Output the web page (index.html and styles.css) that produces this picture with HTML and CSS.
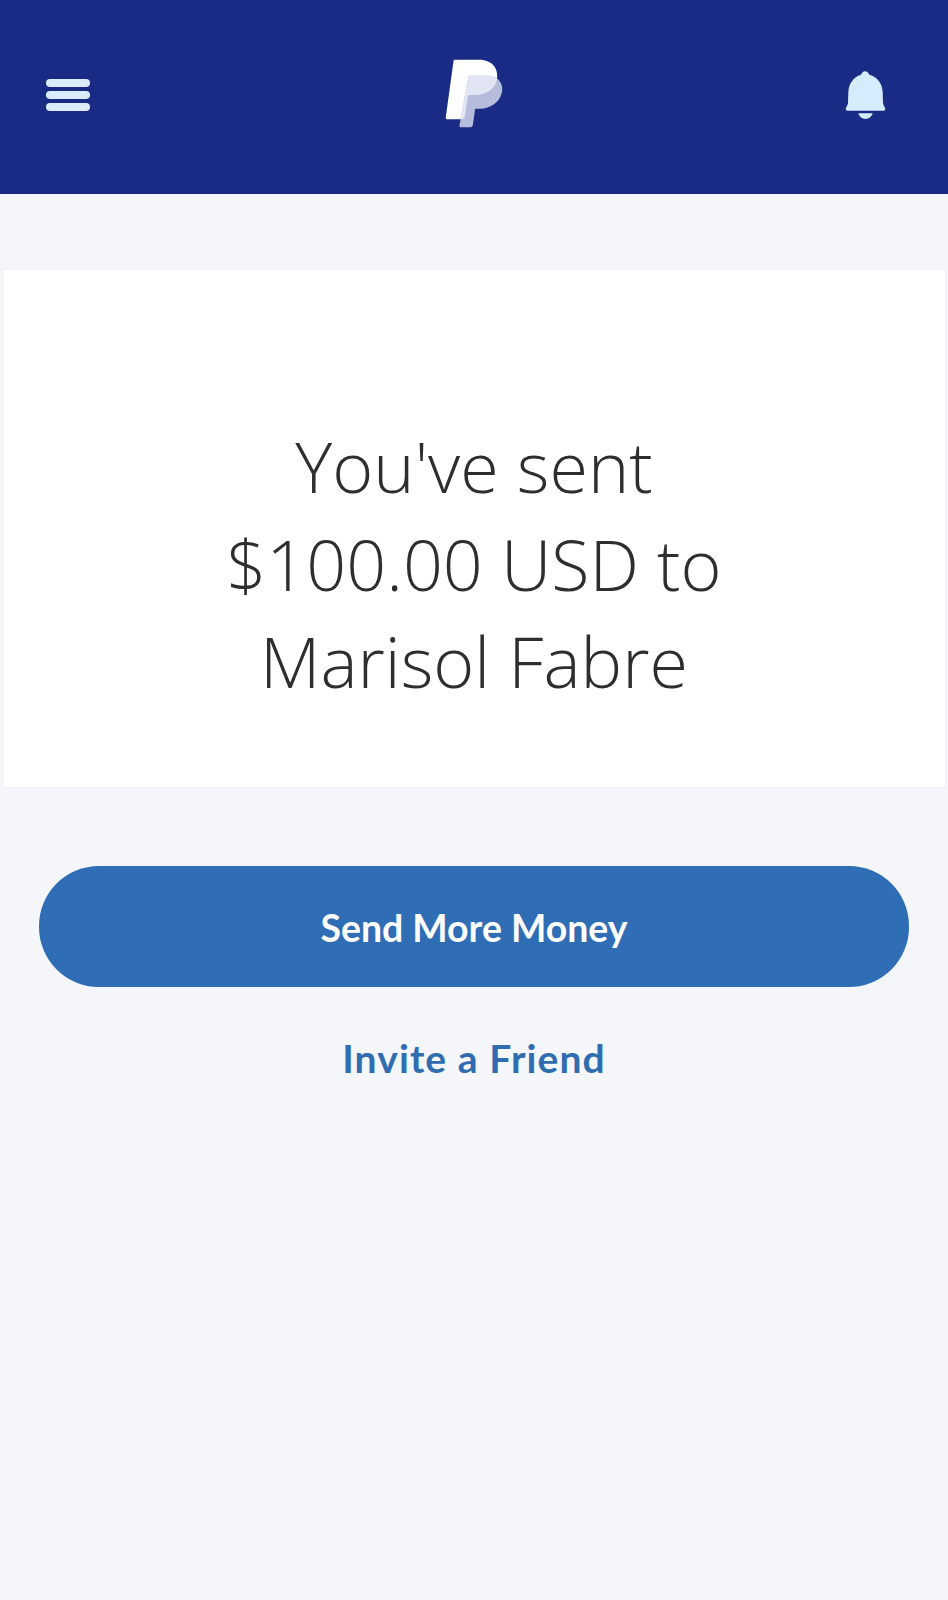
FILE: index.html
```html
<!DOCTYPE html>
<html lang="en">
<head>
<meta charset="utf-8">
<title>PayPal</title>
<link rel="stylesheet" href="styles.css">
</head>
<body>
<header class="topbar">
  <div class="menu"><span></span><span></span><span></span></div>
  <svg class="logo" viewBox="100 55 185 210" aria-hidden="true">
    <defs>
      <path id="front" d="M135 60H208C248 60 268 88 261 122C253 152 226 166 196 166H175L165 232C164 237 160 239 155 239H113C109 239 107 236 108 232L131 64C132 61 133 60 135 60Z"/>
      <path id="back" d="M176 108H240C268 112 282 134 276 160C268 190 240 207 212 207H196L189 257C188 261 185 263 181 263H154C150 263 148 260 149 256Z"/>
      <clipPath id="frontclip"><use href="#front"/></clipPath>
    </defs>
    <use href="#front" class="logo-front"/>
    <use href="#back" class="logo-back"/>
    <use href="#back" class="logo-overlap" clip-path="url(#frontclip)"/>
  </svg>
  <svg class="bell" viewBox="105 58 123 150" aria-hidden="true">
    <path d="M165 62C171 62 175 66 178 72C203 79 217 99 218 124L219 156C220 164 223 167 225 171C227 175 225 180 220 180H113C108 180 106 175 108 171C110 167 113 164 114 156L115 124C116 99 130 79 153 72C156 66 159 62 165 62Z"/>
    <path d="M145 188H188C185 198 177 205 166 205C156 205 148 198 145 188Z"/>
  </svg>
</header>
<main class="content">
  <section class="card">
    <h1 class="message">You've sent<br>$100.00 USD to<br>Marisol Fabre</h1>
  </section>
  <div class="actions">
    <a class="primary" href="#">Send More Money</a>
    <a class="secondary" href="#">Invite a Friend</a>
  </div>
</main>
</body>
</html>
```
FILE: styles.css
```css
* { box-sizing: border-box; }
html, body { margin: 0; padding: 0; }
body {
  min-height: 1600px;
  background: #f4f6fa;
  font-family: "Lato", "Liberation Sans", sans-serif;
  color: #2c2e2f;
}
.topbar {
  height: 194px;
  background: #1a2b86;
  display: grid;
  grid-template-columns: 1fr auto 1fr;
  align-items: center;
  padding: 0 46px 4px;
}
.menu { display: flex; flex-direction: column; gap: 4.5px; width: 44px; }
.menu span { display: block; height: 7.5px; border-radius: 4px; background: #dcecfb; }
.logo { width: 62px; height: 70px; display: block; margin-bottom: 4px; }
.logo-front { fill: #ffffff; }
.logo-back { fill: #b6bcdc; }
.logo-overlap { fill: #e2e5f3; }
.bell { width: 41px; height: 50px; display: block; fill: #d5ecfc; justify-self: end; margin-right: 16px; }
.content { padding-top: 75px; }
.card {
  margin: 0 2px;
  height: 519px;
  background: #ffffff;
  border: 1px solid #eef0f4;
  display: flex;
  justify-content: center;
  padding-top: 148px;
}
.message {
  margin: 0;
  font-family: "Open Sans", "Liberation Sans", sans-serif;
  font-size: 70px;
  font-weight: 300;
  line-height: 97.5px;
  text-align: center;
}
.actions {
  display: flex;
  flex-direction: column;
  align-items: center;
  padding: 78px 39px 0;
}
.primary {
  width: 100%;
  height: 121px;
  padding-top: 1px;
  border-radius: 60px;
  background: #2f6db5;
  color: #ffffff;
  font-size: 37.4px;
  font-weight: 700;
  display: flex;
  align-items: center;
  justify-content: center;
  text-decoration: none;
}
.secondary {
  margin-top: 48px;
  color: #2f6db0;
  font-size: 39px;
  letter-spacing: 1.1px;
  font-weight: 700;
  line-height: 46px;
  text-decoration: none;
}
```
